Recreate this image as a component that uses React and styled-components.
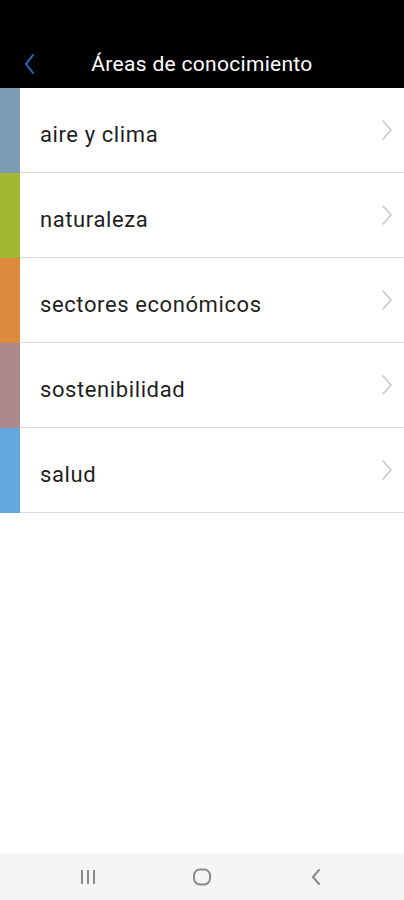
import React from "react";
import styled, { createGlobalStyle } from "styled-components";

const GlobalStyle = createGlobalStyle`
  html, body {
    margin: 0;
    padding: 0;
    background: #ffffff;
  }
  * {
    box-sizing: border-box;
  }
`;

const Screen = styled.div`
  width: 404px;
  height: 900px;
  display: flex;
  flex-direction: column;
  background: #ffffff;
  font-family: Roboto, "Noto Sans", "Liberation Sans", sans-serif;
  overflow: hidden;
`;

const Header = styled.header`
  height: 88px;
  padding-top: 40px;
  background: #000000;
  display: flex;
  flex-direction: column;
`;

const Toolbar = styled.div`
  height: 48px;
  display: grid;
  grid-template-columns: 60px 1fr 60px;
  align-items: center;
`;

const BackButton = styled.button`
  border: none;
  background: none;
  padding: 0 0 0 22px;
  height: 100%;
  display: flex;
  align-items: center;
  cursor: pointer;
`;

const Title = styled.h1`
  margin: 0;
  text-align: center;
  color: #ffffff;
  font-size: 21px;
  font-weight: 400;
  letter-spacing: 0.3px;
`;

const List = styled.ul`
  list-style: none;
  margin: 0;
  padding: 0;
  flex: 1;
`;

const Row = styled.li`
  height: 85px;
  display: grid;
  grid-template-columns: 20px 1fr;
`;

const ColorBar = styled.div`
  background: ${(props) => props.color};
`;

const RowBody = styled.div`
  display: flex;
  align-items: center;
  justify-content: space-between;
  padding: 0 10px 0 20px;
  border-bottom: 1.5px solid #dcdcdc;
`;

const Label = styled.span`
  font-size: 22px;
  letter-spacing: 0.6px;
  color: #1f1f1f;
  padding-top: 8px;
`;

const NavBar = styled.nav`
  height: 47px;
  background: #f5f5f5;
  display: flex;
  align-items: center;
  justify-content: center;
  gap: 90px;
`;

const NavIcon = styled.div`
  width: 24px;
  height: 24px;
  display: flex;
  align-items: center;
  justify-content: center;
`;

const areas = [
  { name: "aire y clima", color: "#7b9bb7" },
  { name: "naturaleza", color: "#a3b832" },
  { name: "sectores económicos", color: "#de8a3c" },
  { name: "sostenibilidad", color: "#ad888c" },
  { name: "salud", color: "#62a7e0" },
];

function Chevron() {
  return (
    <svg width="14" height="22" viewBox="0 0 14 22">
      <path
        d="M3 2 L11 11 L3 20"
        fill="none"
        stroke="#c8c8c8"
        strokeWidth="1.6"
        strokeLinecap="round"
        strokeLinejoin="round"
      />
    </svg>
  );
}

export default function App() {
  return (
    <Screen>
      <GlobalStyle />
      <Header>
        <Toolbar>
          <BackButton aria-label="Volver">
            <svg width="14" height="22" viewBox="0 0 14 22">
              <path
                d="M11 2 L4 11 L11 20"
                fill="none"
                stroke="#1f6fd1"
                strokeWidth="2"
                strokeLinecap="round"
                strokeLinejoin="round"
              />
            </svg>
          </BackButton>
          <Title>Áreas de conocimiento</Title>
          <div />
        </Toolbar>
      </Header>
      <List>
        {areas.map((area) => (
          <Row key={area.name}>
            <ColorBar color={area.color} />
            <RowBody>
              <Label>{area.name}</Label>
              <Chevron />
            </RowBody>
          </Row>
        ))}
      </List>
      <NavBar>
        <NavIcon>
          <svg width="18" height="16" viewBox="0 0 18 16">
            <path d="M3 1 V15 M9 1 V15 M15 1 V15" stroke="#8a8a8a" strokeWidth="2" />
          </svg>
        </NavIcon>
        <NavIcon>
          <svg width="20" height="18" viewBox="0 0 20 18">
            <rect x="2" y="1.5" width="16" height="15" rx="6" fill="none" stroke="#8a8a8a" strokeWidth="2" />
          </svg>
        </NavIcon>
        <NavIcon>
          <svg width="14" height="18" viewBox="0 0 14 18">
            <path d="M10 2 L4 9 L10 16" fill="none" stroke="#8a8a8a" strokeWidth="2" strokeLinecap="round" strokeLinejoin="round" />
          </svg>
        </NavIcon>
      </NavBar>
    </Screen>
  );
}
